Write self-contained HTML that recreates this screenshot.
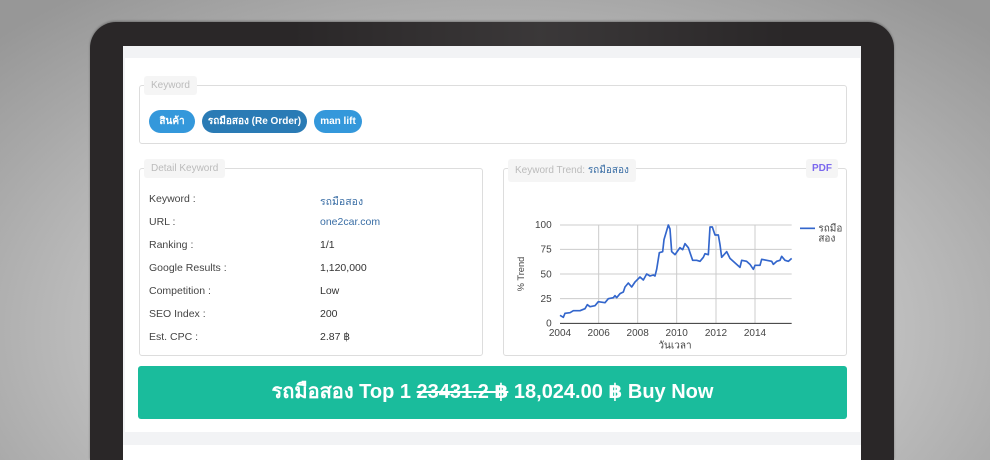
<!DOCTYPE html>
<html><head><meta charset="utf-8"><style>
*{margin:0;padding:0;box-sizing:border-box}
html,body{width:990px;height:460px;overflow:hidden}
body{position:relative;font-family:"Liberation Sans","DejaVu Sans","Noto Sans CJK SC",sans-serif;background:radial-gradient(ellipse 700px 420px at 500px 330px,#d2d2d2 0%,#c4c4c4 50%,#a8a8a8 80%,#979797 100%)}
.bezel{position:absolute;left:90px;top:22px;width:804px;height:438px;background:#2a2728;border-radius:26px 26px 0 0;box-shadow:0 -1px 2px rgba(0,0,0,.3)}
.bezel:before{content:"";position:absolute;left:200px;top:0;width:500px;height:40px;background:linear-gradient(90deg,rgba(255,255,255,0),rgba(255,255,255,.08),rgba(255,255,255,0))}
.screen{position:absolute;left:123px;top:46px;width:738px;height:414px;background:#f2f3f5}
.card{position:absolute;left:125px;top:58px;width:735px;height:374px;background:#fff}
.strip{position:absolute;left:123px;top:445px;width:738px;height:15px;background:#fff}
.box{position:absolute;border:1px solid #ddd;border-radius:3px;background:#fff}
.leg{position:absolute;top:-10px;left:4px;background:#f5f5f5;color:#bbb;font-size:10px;padding:4px 7px;border-radius:3px}
.pill{position:absolute;top:110px;height:23px;line-height:23px;border-radius:12px;color:#fff;font-size:10px;font-weight:bold;text-align:center;background:#3498db}
.row{position:absolute;font-size:10.5px;color:#444}
.v{position:absolute;left:320px;font-size:10.5px;color:#333}
.btn{position:absolute;left:138px;top:366px;width:709px;height:53px;background:#1abc9c;border-radius:3px;color:#fff;font-size:20px;font-weight:bold;text-align:center;line-height:53px}
</style></head><body>
<div class="bezel"></div>
<div class="screen"></div>
<div class="card"></div>
<div class="strip"></div>

<div class="box" style="left:139px;top:85px;width:708px;height:59px"><div class="leg">Keyword</div></div>
<div class="pill" style="left:149px;width:46px">สินค้า</div>
<div class="pill" style="left:202px;width:105px;background:#2a7bb5">รถมือสอง (Re Order)</div>
<div class="pill" style="left:314px;width:48px">man lift</div>

<div class="box" style="left:139px;top:168px;width:344px;height:188px"><div class="leg">Detail Keyword</div></div>
<div class="row" style="left:149px;top:193px">Keyword :</div><div class="v" style="top:193px;color:#3a6ea5">รถมือสอง</div>
<div class="row" style="left:149px;top:216px">URL :</div><div class="v" style="top:216px;color:#3a6ea5">one2car.com</div>
<div class="row" style="left:149px;top:239px">Ranking :</div><div class="v" style="top:239px">1/1</div>
<div class="row" style="left:149px;top:262px">Google Results :</div><div class="v" style="top:262px">1,120,000</div>
<div class="row" style="left:149px;top:285px">Competition :</div><div class="v" style="top:285px">Low</div>
<div class="row" style="left:149px;top:308px">SEO Index :</div><div class="v" style="top:308px">200</div>
<div class="row" style="left:149px;top:331px">Est. CPC :</div><div class="v" style="top:331px">2.87 ฿</div>

<div class="box" style="left:503px;top:168px;width:344px;height:188px"><div class="leg">Keyword Trend: <span style="color:#3a6ea5">รถมือสอง</span></div>
<div class="leg" style="left:auto;right:8px;color:#7b68ee;font-weight:bold;padding:4px 6px">PDF</div></div>

<svg style="position:absolute;left:500px;top:150px" width="400" height="210" viewBox="0 0 1200 630">
<g stroke="#ccc" stroke-width="3">
<line x1="180" y1="225" x2="875" y2="225"/><line x1="180" y1="298" x2="875" y2="298"/><line x1="180" y1="372" x2="875" y2="372"/><line x1="180" y1="446" x2="875" y2="446"/>
<line x1="296" y1="225" x2="296" y2="520"/><line x1="413" y1="225" x2="413" y2="520"/><line x1="530" y1="225" x2="530" y2="520"/><line x1="648" y1="225" x2="648" y2="520"/><line x1="765" y1="225" x2="765" y2="520"/>
</g>
<line x1="180" y1="520" x2="875" y2="520" stroke="#333" stroke-width="3"/>
<g font-family="Liberation Sans,sans-serif" font-size="30" fill="#444">
<text x="155" y="234" text-anchor="end">100</text><text x="155" y="308" text-anchor="end">75</text><text x="155" y="382" text-anchor="end">50</text><text x="155" y="456" text-anchor="end">25</text><text x="155" y="530" text-anchor="end">0</text>
<text x="180" y="558" text-anchor="middle">2004</text><text x="296" y="558" text-anchor="middle">2006</text><text x="413" y="558" text-anchor="middle">2008</text><text x="530" y="558" text-anchor="middle">2010</text><text x="648" y="558" text-anchor="middle">2012</text><text x="765" y="558" text-anchor="middle">2014</text>
<text x="525" y="595" text-anchor="middle">วันเวลา</text>
<text x="0" y="0" transform="translate(72,372) rotate(-90)" text-anchor="middle" font-size="28">% Trend</text>
<text x="955" y="245">รถมือ</text><text x="955" y="275">สอง</text>
</g>
<line x1="900" y1="235" x2="945" y2="235" stroke="#3366cc" stroke-width="5"/>
<polyline fill="none" stroke="#3366cc" stroke-width="5" stroke-linejoin="round" points="180,496 190,502 195,490 210,488 220,482 240,482 255,476 262,464 270,470 285,467 295,455 315,458 325,446 340,443 345,437 350,443 360,431 370,426 375,411 385,399 395,411 405,396 420,381 430,390 440,372 450,378 460,375 465,378 470,358 478,308 488,305 492,269 505,225 510,237 515,305 525,314 540,293 548,299 555,281 565,293 570,308 578,331 590,331 600,334 610,322 615,311 625,314 630,231 637,231 645,255 655,255 660,284 665,322 680,305 690,325 700,334 710,343 720,352 725,331 740,334 750,343 760,358 765,346 780,346 785,328 800,331 815,334 820,343 830,334 840,331 845,319 855,331 865,334 875,325"/>
</svg>

<div class="btn">รถมือสอง Top 1 <s>23431.2 ฿</s> 18,024.00 ฿ Buy Now</div>
</body></html>
